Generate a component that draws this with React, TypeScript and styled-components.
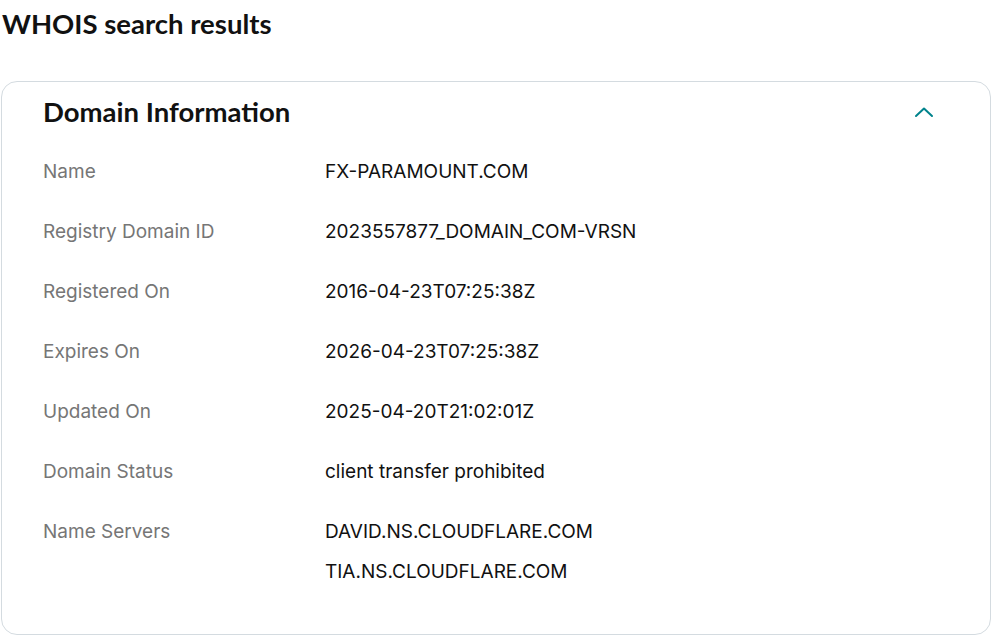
import React from "react";
import styled, { createGlobalStyle } from "styled-components";

const Global = createGlobalStyle`
  html, body { margin: 0; padding: 0; background: #ffffff; }
  body { font-family: "Inter", Arial, sans-serif; color: #111111; }
`;

const Page = styled.div`
  width: 1000px;
  padding: 0 9px 0 1px;
  box-sizing: border-box;
`;

const Title = styled.h1`
  margin: 0;
  padding: 7px 0 0 1px;
  height: 81px;
  box-sizing: border-box;
  font-family: "Lato", sans-serif;
  font-weight: 700;
  font-size: 27.5px;
  line-height: 34px;
  color: #111111;
`;

const Card = styled.section`
  border: 1px solid #d4dbe0;
  border-radius: 16px;
  padding: 0 42px 33px 41px;
`;

const Header = styled.div`
  height: 59px;
  display: flex;
  align-items: center;
  justify-content: space-between;
`;

const Heading = styled.h2`
  margin: 0;
  font-family: "Lato", sans-serif;
  font-weight: 700;
  font-size: 27.5px;
  line-height: 32px;
  color: #111111;
`;

const Toggle = styled.button`
  border: 0;
  background: none;
  padding: 0;
  margin-right: 12px;
  width: 24px;
  height: 24px;
  display: flex;
  align-items: center;
  justify-content: center;
  color: #00838c;
`;

const Row = styled.div`
  display: grid;
  grid-template-columns: 282px 1fr;
  padding: 19px 0 17px;
`;

const Label = styled.div`
  font-family: "Inter", sans-serif;
  font-size: 19px;
  line-height: 24px;
  color: #767676;
`;

const Values = styled.div`
  display: flex;
  flex-direction: column;
  gap: 16px;
`;

const Value = styled.div`
  font-family: "Inter", sans-serif;
  font-size: 19px;
  line-height: 24px;
  color: #111111;
`;

const rows: [string, string[]][] = [
  ["Name", ["FX-PARAMOUNT.COM"]],
  ["Registry Domain ID", ["2023557877_DOMAIN_COM-VRSN"]],
  ["Registered On", ["2016-04-23T07:25:38Z"]],
  ["Expires On", ["2026-04-23T07:25:38Z"]],
  ["Updated On", ["2025-04-20T21:02:01Z"]],
  ["Domain Status", ["client transfer prohibited"]],
  ["Name Servers", ["DAVID.NS.CLOUDFLARE.COM", "TIA.NS.CLOUDFLARE.COM"]],
];

export default function App() {
  return (
    <Page>
      <Global />
      <Title>WHOIS search results</Title>
      <Card>
        <Header>
          <Heading>Domain Information</Heading>
          <Toggle aria-label="Collapse">
            <svg width="20" height="12" viewBox="0 0 20 12" fill="none">
              <path d="M2 10 L10 2.5 L18 10" stroke="currentColor" strokeWidth="2" strokeLinecap="round" strokeLinejoin="round" />
            </svg>
          </Toggle>
        </Header>
        {rows.map(([label, values]) => (
          <Row key={label}>
            <Label>{label}</Label>
            <Values>
              {values.map((v) => (
                <Value key={v}>{v}</Value>
              ))}
            </Values>
          </Row>
        ))}
      </Card>
    </Page>
  );
}
